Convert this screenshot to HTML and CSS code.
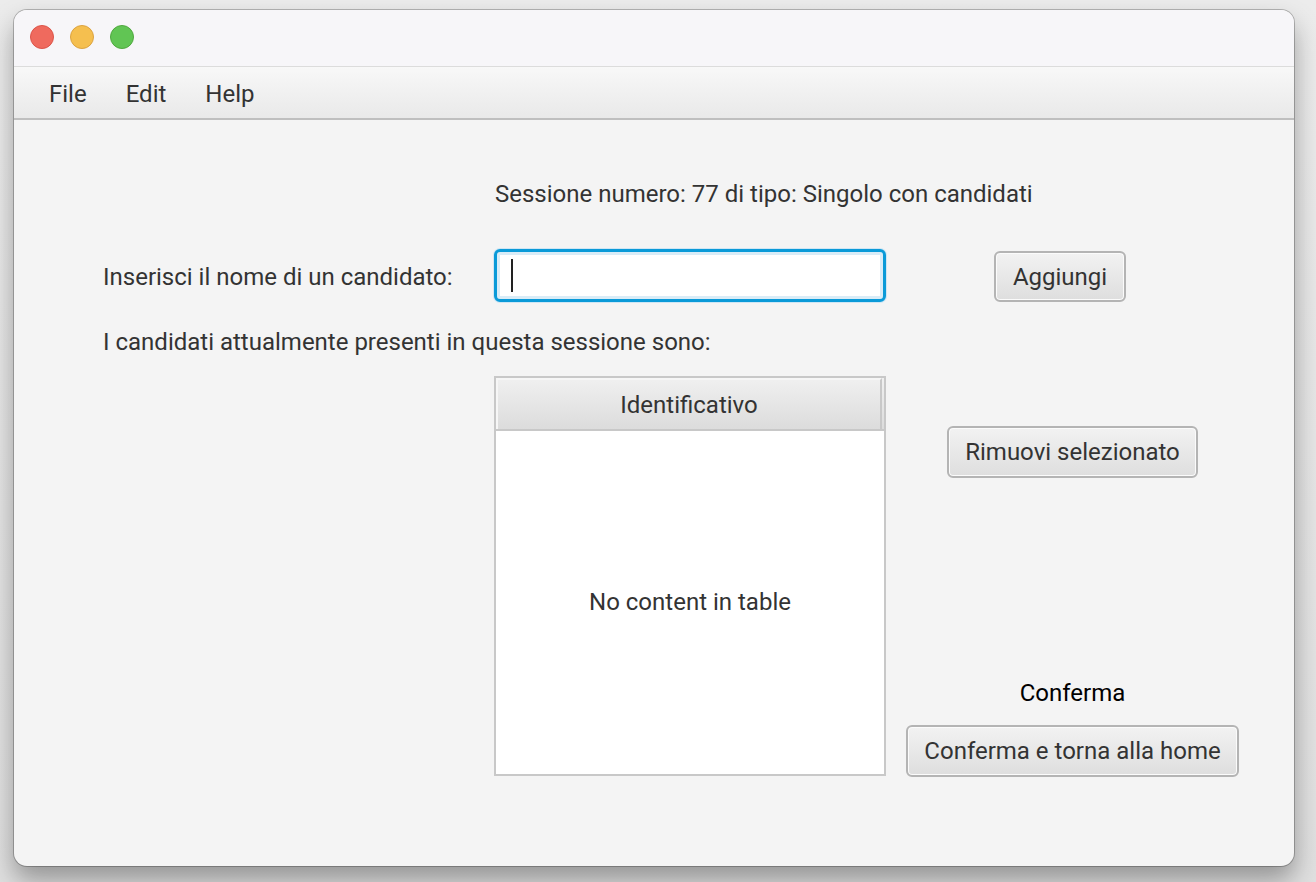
FILE: index.html
```html
<!DOCTYPE html>
<html lang="it">
<head>
<meta charset="utf-8">
<title>Sessione</title>
<link rel="stylesheet" href="styles.css">
</head>
<body>
<div class="window">
  <div class="titlebar">
    <span class="light red"></span>
    <span class="light yellow"></span>
    <span class="light green"></span>
  </div>
  <div class="menubar">
    <span class="menu">File</span>
    <span class="menu">Edit</span>
    <span class="menu">Help</span>
  </div>
  <div class="content">
    <div class="session-label">Sessione numero: 77 di tipo: Singolo con candidati</div>
    <div class="name-label">Inserisci il nome di un candidato:</div>
    <div class="field"><span class="caret"></span></div>
    <div class="add-cell"><button class="btn btn-add">Aggiungi</button></div>
    <div class="list-label">I candidati attualmente presenti in questa sessione sono:</div>
    <div class="table">
      <div class="table-header">
        <div class="col-head">Identificativo</div>
        <div class="col-filler"></div>
      </div>
      <div class="table-body">No content in table</div>
    </div>
    <div class="side">
      <button class="btn btn-remove">Rimuovi selezionato</button>
      <div class="side-spacer"></div>
      <div class="confirm-label">Conferma</div>
      <button class="btn btn-confirm">Conferma e torna alla home</button>
    </div>
  </div>
</div>
</body>
</html>
```

FILE: styles.css
```css
* { box-sizing: border-box; }
html, body { margin: 0; padding: 0; }
body {
  width: 1316px;
  height: 882px;
  background: linear-gradient(#ececec, #e0e0e0);
  padding: 10px 22px 16px 14px;
  font-family: Roboto, "Liberation Sans", sans-serif;
  overflow: hidden;
}
.window {
  width: 1280px;
  height: 856px;
  border-radius: 13px;
  background: #f4f4f4;
  box-shadow: 0 0 0 1px rgba(0,0,0,0.24), 0 14px 26px rgba(0,0,0,0.34);
  overflow: hidden;
  display: flex;
  flex-direction: column;
}
.titlebar {
  height: 57px;
  background: #f7f6f9;
  border-bottom: 1px solid #dcdcdc;
  display: flex;
  align-items: center;
  padding: 0 0 2px 16px;
  gap: 16px;
}
.light {
  width: 24px;
  height: 24px;
  border-radius: 50%;
  display: block;
}
.red { background: #ef6a5e; border: 1px solid #dc5449; }
.yellow { background: #f5bf4f; border: 1px solid #dca341; }
.green { background: #61c554; border: 1px solid #50a83f; }
.menubar {
  height: 53px;
  background: linear-gradient(#f8f8f8, #e9e9e9);
  border-bottom: 2px solid #bfbfbf;
  display: flex;
  align-items: center;
  gap: 39px;
  padding-left: 35px;
  padding-top: 2px;
  font-size: 24px;
  color: #333;
}
.content {
  flex: 1;
  display: grid;
  grid-template-columns: 391px 392px 408px;
  grid-template-rows: auto auto auto auto;
  align-content: start;
  align-items: start;
  padding: 59px 0 0 89px;
  font-size: 24px;
  color: #333;
}
.session-label {
  grid-column: 2 / 4;
  grid-row: 1;
  line-height: 30px;
  padding-left: 1px;
  white-space: nowrap;
}
.name-label {
  grid-column: 1;
  grid-row: 2;
  margin-top: 53px;
  line-height: 30px;
  white-space: nowrap;
}
.field {
  grid-column: 2;
  grid-row: 2;
  margin-top: 40px;
  height: 53px;
  background: #fff;
  border: 3px solid #0a9ad8;
  border-radius: 6px;
  box-shadow: inset 0 0 0 3px #d9ecf7, 0 0 0 1px #cfe6f4;
  position: relative;
}
.caret {
  position: absolute;
  left: 14px;
  top: 7px;
  width: 2px;
  height: 33px;
  background: #222;
}
.add-cell {
  grid-column: 3;
  grid-row: 2;
  margin-top: 42px;
  padding-left: 108px;
  display: flex;
}
.list-label {
  grid-column: 1 / 4;
  grid-row: 3;
  margin-top: 25px;
  line-height: 30px;
  white-space: nowrap;
}
.table {
  grid-column: 2;
  grid-row: 4;
  margin-top: 19px;
  height: 400px;
  border: 2px solid #c8c8c8;
  background: #fff;
  display: flex;
  flex-direction: column;
}
.table-header {
  height: 53px;
  display: flex;
  border-bottom: 2px solid #c8c8c8;
  background: linear-gradient(#f0f0f0, #dcdcdc);
}
.col-head {
  flex: 1;
  display: flex;
  align-items: center;
  justify-content: center;
  border: 2px solid #f6f6f6;
  border-right: 2px solid #c8c8c8;
  border-bottom: none;
}
.col-filler { width: 2px; }
.table-body {
  flex: 1;
  display: flex;
  align-items: center;
  justify-content: center;
  padding-bottom: 2px;
}
.side {
  grid-column: 3;
  grid-row: 4;
  margin-top: 19px;
  margin-left: 20px;
  width: 333px;
  height: 401px;
  display: flex;
  flex-direction: column;
  align-items: center;
  padding-top: 50px;
}
.side-spacer { flex: 1; }
.confirm-label {
  color: #000;
  line-height: 30px;
  margin-bottom: 17px;
}
.btn {
  font-family: inherit;
  font-size: 24px;
  color: #333;
  height: 52px;
  padding: 0 8px;
  border: 2px solid #b4b4b4;
  border-radius: 6px;
  background: linear-gradient(#f2f2f2, #dedede);
  box-shadow: inset 0 0 0 1px #fbfbfb;
  display: inline-flex;
  align-items: center;
  justify-content: center;
  white-space: nowrap;
}
.btn-add { width: 132px; height: 51px; }
.btn-remove { width: 251px; }
.btn-confirm { width: 333px; }
```
